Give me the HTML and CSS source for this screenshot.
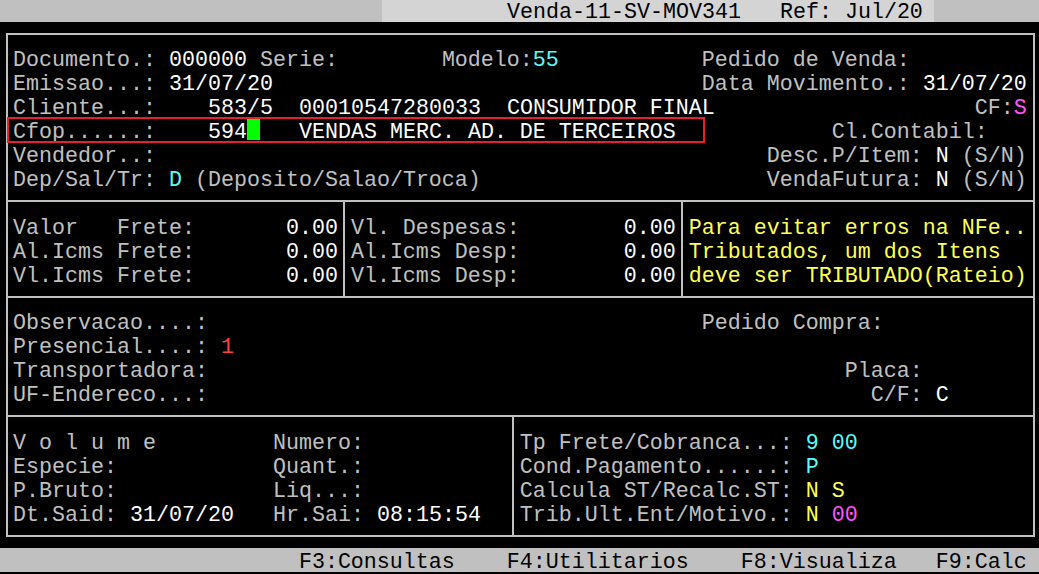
FILE: index.html
```html
<!DOCTYPE html>
<html lang="pt">

<head>
    <meta charset="UTF-8">
    <title>Venda-11-SV-MOV341</title>
    <link rel="stylesheet" href="styles.css">
</head>

<body>

    <div class="screen">

        <div class="topbar"><span class="title">Venda-11-SV-MOV341   Ref: Jul/20</span></div>

        <div class="frame">

            <!-- cabecalho do documento -->
            <div class="sec">
                <div class="pane grow">
                    <div class="row">Documento.: <span class="v">000000</span> Serie:        Modelo:<span class="cy">55</span>           Pedido de Venda:</div>
                    <div class="row">Emissao...: <span class="v">31/07/20</span>                                 Data Movimento.: <span class="v">31/07/20</span></div>
                    <div class="row">Cliente...:    <span class="v">583/5</span>  <span class="v">00010547280033</span>  <span class="v">CONSUMIDOR FINAL</span>                    CF:<span class="mg">S</span></div>
                    <div class="row focus">Cfop......:    <span class="v">594</span><span class="cursor"></span>   <span class="v">VENDAS MERC. AD. DE TERCEIROS</span>            Cl.Contabil:<span class="mark"></span></div>
                    <div class="row">Vendedor..:                                               Desc.P/Item: <span class="v">N</span> (S/N)</div>
                    <div class="row">Dep/Sal/Tr: <span class="cy">D</span> (Deposito/Salao/Troca)                      VendaFutura: <span class="v">N</span> (S/N)</div>
                </div>
            </div>

            <!-- frete e despesas -->
            <div class="sec">
                <div class="pane w25">
                    <div class="row">Valor   Frete:       <span class="v">0.00</span></div>
                    <div class="row">Al.Icms Frete:       <span class="v">0.00</span></div>
                    <div class="row">Vl.Icms Frete:       <span class="v">0.00</span></div>
                </div>
                <div class="pane w25">
                    <div class="row">Vl. Despesas:        <span class="v">0.00</span></div>
                    <div class="row">Al.Icms Desp:        <span class="v">0.00</span></div>
                    <div class="row">Vl.Icms Desp:        <span class="v">0.00</span></div>
                </div>
                <div class="pane grow notice">
                    <div class="row">Para evitar erros na NFe..</div>
                    <div class="row">Tributados, um dos Itens</div>
                    <div class="row">deve ser TRIBUTADO(Rateio)</div>
                </div>
            </div>

            <!-- observacoes -->
            <div class="sec">
                <div class="pane grow">
                    <div class="row">Observacao....:                                      Pedido Compra:</div>
                    <div class="row">Presencial....: <span class="rd">1</span></div>
                    <div class="row">Transportadora:                                                 Placa:</div>
                    <div class="row">UF-Endereco...:                                                   C/F: <span class="v">C</span></div>
                </div>
            </div>

            <!-- volumes e pagamento -->
            <div class="sec">
                <div class="pane w38">
                    <div class="row">V o l u m e         Numero:</div>
                    <div class="row">Especie:            Quant.:</div>
                    <div class="row">P.Bruto:            Liq...:</div>
                    <div class="row">Dt.Said: <span class="v">31/07/20</span>   Hr.Sai: <span class="v">08:15:54</span></div>
                </div>
                <div class="pane grow">
                    <div class="row">Tp Frete/Cobranca...: <span class="cy">9</span> <span class="cy">00</span></div>
                    <div class="row">Cond.Pagamento......: <span class="cy">P</span></div>
                    <div class="row">Calcula ST/Recalc.ST: <span class="yl">N</span> <span class="yl">S</span></div>
                    <div class="row">Trib.Ult.Ent/Motivo.: <span class="yl">N</span> <span class="mg">00</span></div>
                </div>
            </div>

        </div>

        <div class="fkeys row">F3:Consultas    F4:Utilitarios    F8:Visualiza   F9:Calc</div>

    </div>

</body>

</html>
```

FILE: styles.css
```css
html,
body {
    margin: 0;
    padding: 0;
    background-color: #000;
}

body {
    width: 1039px;
    height: 574px;
    overflow: hidden;
    font-family: "Liberation Mono", "DejaVu Sans Mono", monospace;
    font-size: 21.667px;
    color: #c0c0c0;
}

/* one terminal line = 23.92px, one column = 1ch = 13px */
.row {
    box-sizing: border-box;
    height: 23.92px;
    padding-top: 3.5px;
    line-height: 23.92px;
    white-space: pre;
}

.topbar {
    height: 22px;
    margin-bottom: 1.92px;
    line-height: 26px;
    background-color: #c0c0c0;
    color: #000;
    white-space: pre;
}

.title {
    display: inline-block;
    height: 22px;
    margin-left: 382px;
    padding: 0 11px 0 125px;
    background-color: #d4d4d4;
}

.frame {
    width: 1025px;
    margin: 10.96px 0 10.96px 5.5px;
    border: 2px solid #c0c0c0;
}

.sec {
    display: flex;
    border-bottom: 2px solid #c0c0c0;
}

.sec:last-child {
    border-bottom: none;
}

.pane {
    padding: 10.96px 5.5px;
}

.pane + .pane {
    border-left: 2px solid #c0c0c0;
}

.grow {
    flex: 1;
}

.w25 {
    flex: none;
    width: 25ch;
}

.w38 {
    flex: none;
    width: 38ch;
}

.fkeys {
    padding-left: 23ch;
    background-color: #c0c0c0;
    color: #000;
}

/* value colours */
.v {
    color: #fff;
}

.cy {
    color: #55ffff;
}

.mg {
    color: #ff55ff;
}

.yl,
.notice {
    color: #ffff55;
}

.rd {
    color: #ff4040;
}

.cursor {
    display: inline-block;
    width: 1ch;
    height: 22px;
    vertical-align: top;
    margin-top: -3px;
    background-color: #00ff00;
}

/* red highlight drawn over the Cfop line */
.focus {
    position: relative;
}

.mark {
    position: absolute;
    left: -6px;
    top: -1px;
    width: 698px;
    height: 26px;
    box-sizing: border-box;
    border: 2px solid #e8202a;
}
```
